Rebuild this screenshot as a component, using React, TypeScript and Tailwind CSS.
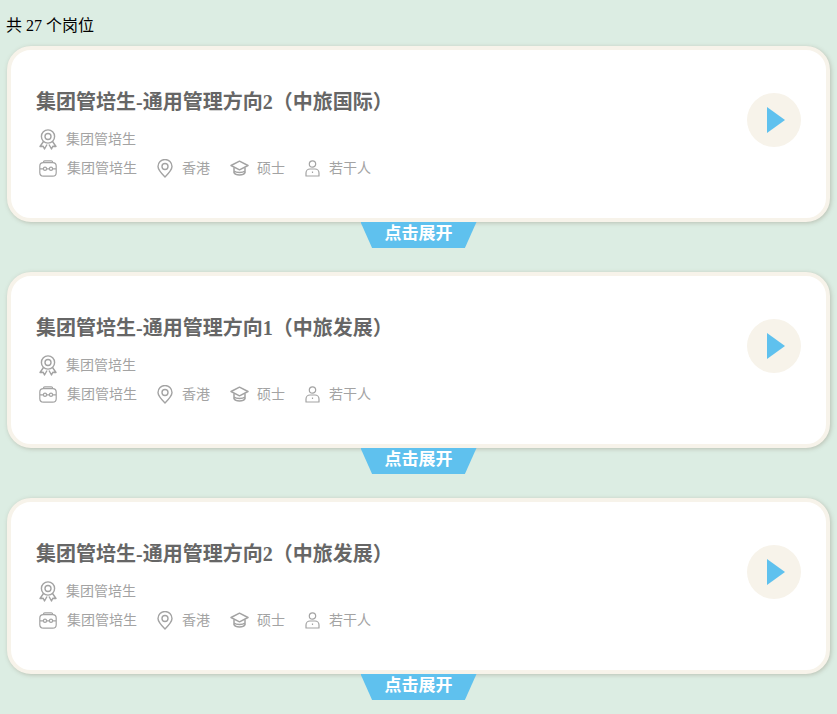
const jobs = [
  '集团管培生-通用管理方向2（中旅国际）',
  '集团管培生-通用管理方向1（中旅发展）',
  '集团管培生-通用管理方向2（中旅发展）',
]

function Medal() {
  return (
    <svg width="18" height="21" viewBox="0 0 18 21" fill="none" stroke="#a3a3a3" strokeWidth="1.4" className="ml-[3px] shrink-0">
      <circle cx="9" cy="7.500" r="6.600" />
      <circle cx="9" cy="7.500" r="3" />
      <path d="M4.500 12.500 1 17.500l3.200-.2L5.500 20 8 15.500M13.500 12.500l3.500 5-3.200-.2L12.500 20 10 15.500" strokeLinejoin="round" />
    </svg>
  )
}

function Briefcase() {
  return (
    <svg width="18" height="17" viewBox="0 0 18 17" fill="none" stroke="#a3a3a3" strokeWidth="1.2" className="ml-[3px] shrink-0">
      <rect x="0.800" y="2.600" width="16.400" height="13.600" rx="3.500" />
      <path d="M4.500 2.600V2a1.200 1.200 0 0 1 1.200-1.200h6.600A1.200 1.200 0 0 1 13.500 2v.6M1 8.800h3.400M7.600 8.800h2.800M13.600 8.800H17" />
      <circle cx="6" cy="8.800" r="1.600" />
      <circle cx="12" cy="8.800" r="1.600" />
    </svg>
  )
}

function Pin() {
  return (
    <svg width="16" height="19" viewBox="0 0 16 19" fill="none" stroke="#a3a3a3" strokeWidth="1.4" className="shrink-0">
      <path d="M8 18C4 14 1 11 1 7.500a7 7 0 0 1 14 0C15 11 12 14 8 18Z" strokeLinejoin="round" />
      <circle cx="8" cy="7.500" r="3" />
    </svg>
  )
}

function Cap() {
  return (
    <svg width="19" height="17" viewBox="0 0 19 17" fill="none" stroke="#a3a3a3" strokeWidth="1.5" className="shrink-0">
      <path d="M9.500 1.200 18 5.500 9.500 9.800 1 5.500Z" strokeLinejoin="round" />
      <path d="M4 7.500v5.200c1.500 3 9.500 3 11 0V7.500M4 11c2.500 2 8.500 2 11 0" />
    </svg>
  )
}

function Person() {
  return (
    <svg width="15" height="17" viewBox="0 0 15 17" fill="none" stroke="#a3a3a3" strokeWidth="1.2" className="shrink-0">
      <circle cx="7.500" cy="4" r="3.200" />
      <path d="M1 16v-3a4 4 0 0 1 4-4h5a4 4 0 0 1 4 4v3ZM7.500 11.500v1.500" strokeLinejoin="round" />
    </svg>
  )
}

function JobCard({ title }: { title: string }) {
  return (
    <div className="mb-[24px]">
      <div className="mx-[7px] flex h-[176px] items-start justify-between rounded-[24px] border-4 border-[#f7f3ea] bg-white pl-[25px] pr-[25px] shadow-[1px_1px_4px_rgba(120,110,90,0.35)]">
        <div className="mt-[38px]">
          <h3 className="text-[20px] font-bold leading-[28px] text-[#666666]">{title}</h3>
          <div className="mt-[12px] flex h-[22px] items-center gap-[9px] text-[14px] text-[#a3a3a3]">
            <Medal />
            <span>集团管培生</span>
          </div>
          <div className="mt-[7px] flex h-[22px] items-center text-[14px] text-[#a3a3a3]">
            <Briefcase />
            <span className="ml-[10px]">集团管培生</span>
            <span className="ml-[20px]"><Pin /></span>
            <span className="ml-[9px]">香港</span>
            <span className="ml-[20px]"><Cap /></span>
            <span className="ml-[8px]">硕士</span>
            <span className="ml-[20px]"><Person /></span>
            <span className="ml-[9px]">若干人</span>
          </div>
        </div>
        <div className="mt-[43px] flex h-[54px] w-[54px] items-center justify-center rounded-full bg-[#f7f3ea]">
          <svg width="18" height="26" viewBox="0 0 18 26" className="ml-[4px]">
            <path d="M0 0 18 13 0 26Z" fill="#5fc1ee" />
          </svg>
        </div>
      </div>
      <div className="mx-auto flex h-[26px] w-[116px] items-start justify-center bg-[#5fc1ee] text-[17px] font-bold leading-[23px] text-white [clip-path:polygon(0_0,100%_0,90%_100%,10%_100%)]">
        点击展开
      </div>
    </div>
  )
}

export default function App() {
  return (
    <div className="h-[714px] overflow-hidden bg-[#dcede3] pt-[15px] font-['Liberation_Serif','Noto_Sans_CJK_SC',serif] text-[16px] text-black">
      <p className="mb-[5px] h-[26px] pl-[6px] leading-[22px]">共 27 个岗位</p>
      {jobs.map((title) => (
        <JobCard key={title} title={title} />
      ))}
    </div>
  )
}
